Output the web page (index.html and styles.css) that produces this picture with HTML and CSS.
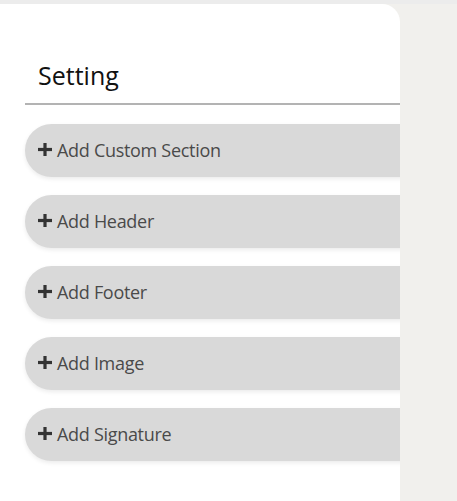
FILE: index.html
```html
<!DOCTYPE html>
<html>
<head>
<meta charset="utf-8">
<link rel="stylesheet" href="styles.css">
</head>
<body>
<div class="topband"></div>
<div class="layout">
  <aside class="card">
    <h2 class="title">Setting</h2>
    <div class="list">
      <button class="item"><svg class="plus" viewBox="0 0 14 13"><rect x="5.4" y="0" width="3.2" height="13"/><rect x="0" y="4.9" width="14" height="3.2"/></svg><span>Add Custom Section</span></button>
      <button class="item"><svg class="plus" viewBox="0 0 14 13"><rect x="5.4" y="0" width="3.2" height="13"/><rect x="0" y="4.9" width="14" height="3.2"/></svg><span>Add Header</span></button>
      <button class="item"><svg class="plus" viewBox="0 0 14 13"><rect x="5.4" y="0" width="3.2" height="13"/><rect x="0" y="4.9" width="14" height="3.2"/></svg><span>Add Footer</span></button>
      <button class="item"><svg class="plus" viewBox="0 0 14 13"><rect x="5.4" y="0" width="3.2" height="13"/><rect x="0" y="4.9" width="14" height="3.2"/></svg><span>Add Image</span></button>
      <button class="item"><svg class="plus" viewBox="0 0 14 13"><rect x="5.4" y="0" width="3.2" height="13"/><rect x="0" y="4.9" width="14" height="3.2"/></svg><span>Add Signature</span></button>
    </div>
  </aside>
  <main class="canvas"></main>
</div>
</body>
</html>
```
FILE: styles.css
```css
html, body {
  margin: 0;
  padding: 0;
  height: 100%;
  background: #f1f0ed;
  font-family: "Open Sans", "Liberation Sans", sans-serif;
}
.topband {
  height: 4px;
  background: #ececec;
}
.layout {
  display: flex;
  height: 497px;
}
.card {
  width: 400px;
  flex: none;
  background: #ffffff;
  border-top-right-radius: 18px;
  overflow: hidden;
  padding: 56px 0 0 25px;
  box-sizing: border-box;
}
.title {
  margin: 0;
  padding: 0 0 13px 13px;
  font-size: 25px;
  font-weight: 400;
  line-height: 30px;
  color: #111;
  border-bottom: 2px solid #b3b3b3;
}
.list {
  display: flex;
  flex-direction: column;
  gap: 18px;
  padding-top: 19px;
}
.item {
  display: flex;
  align-items: center;
  gap: 5px;
  width: 400px;
  height: 53px;
  padding: 0 0 2px 13px;
  border: none;
  border-radius: 27px 0 0 27px;
  background: #d9d9d9;
  box-shadow: 0 2px 4px rgba(0,0,0,0.08);
  font-family: inherit;
  font-size: 18px;
  letter-spacing: -0.3px;
  color: #4a4a4a;
  text-align: left;
  cursor: pointer;
}
.plus {
  width: 14px;
  height: 13px;
  fill: #333;
  flex: none;
}
.canvas {
  flex: 1;
}
```
